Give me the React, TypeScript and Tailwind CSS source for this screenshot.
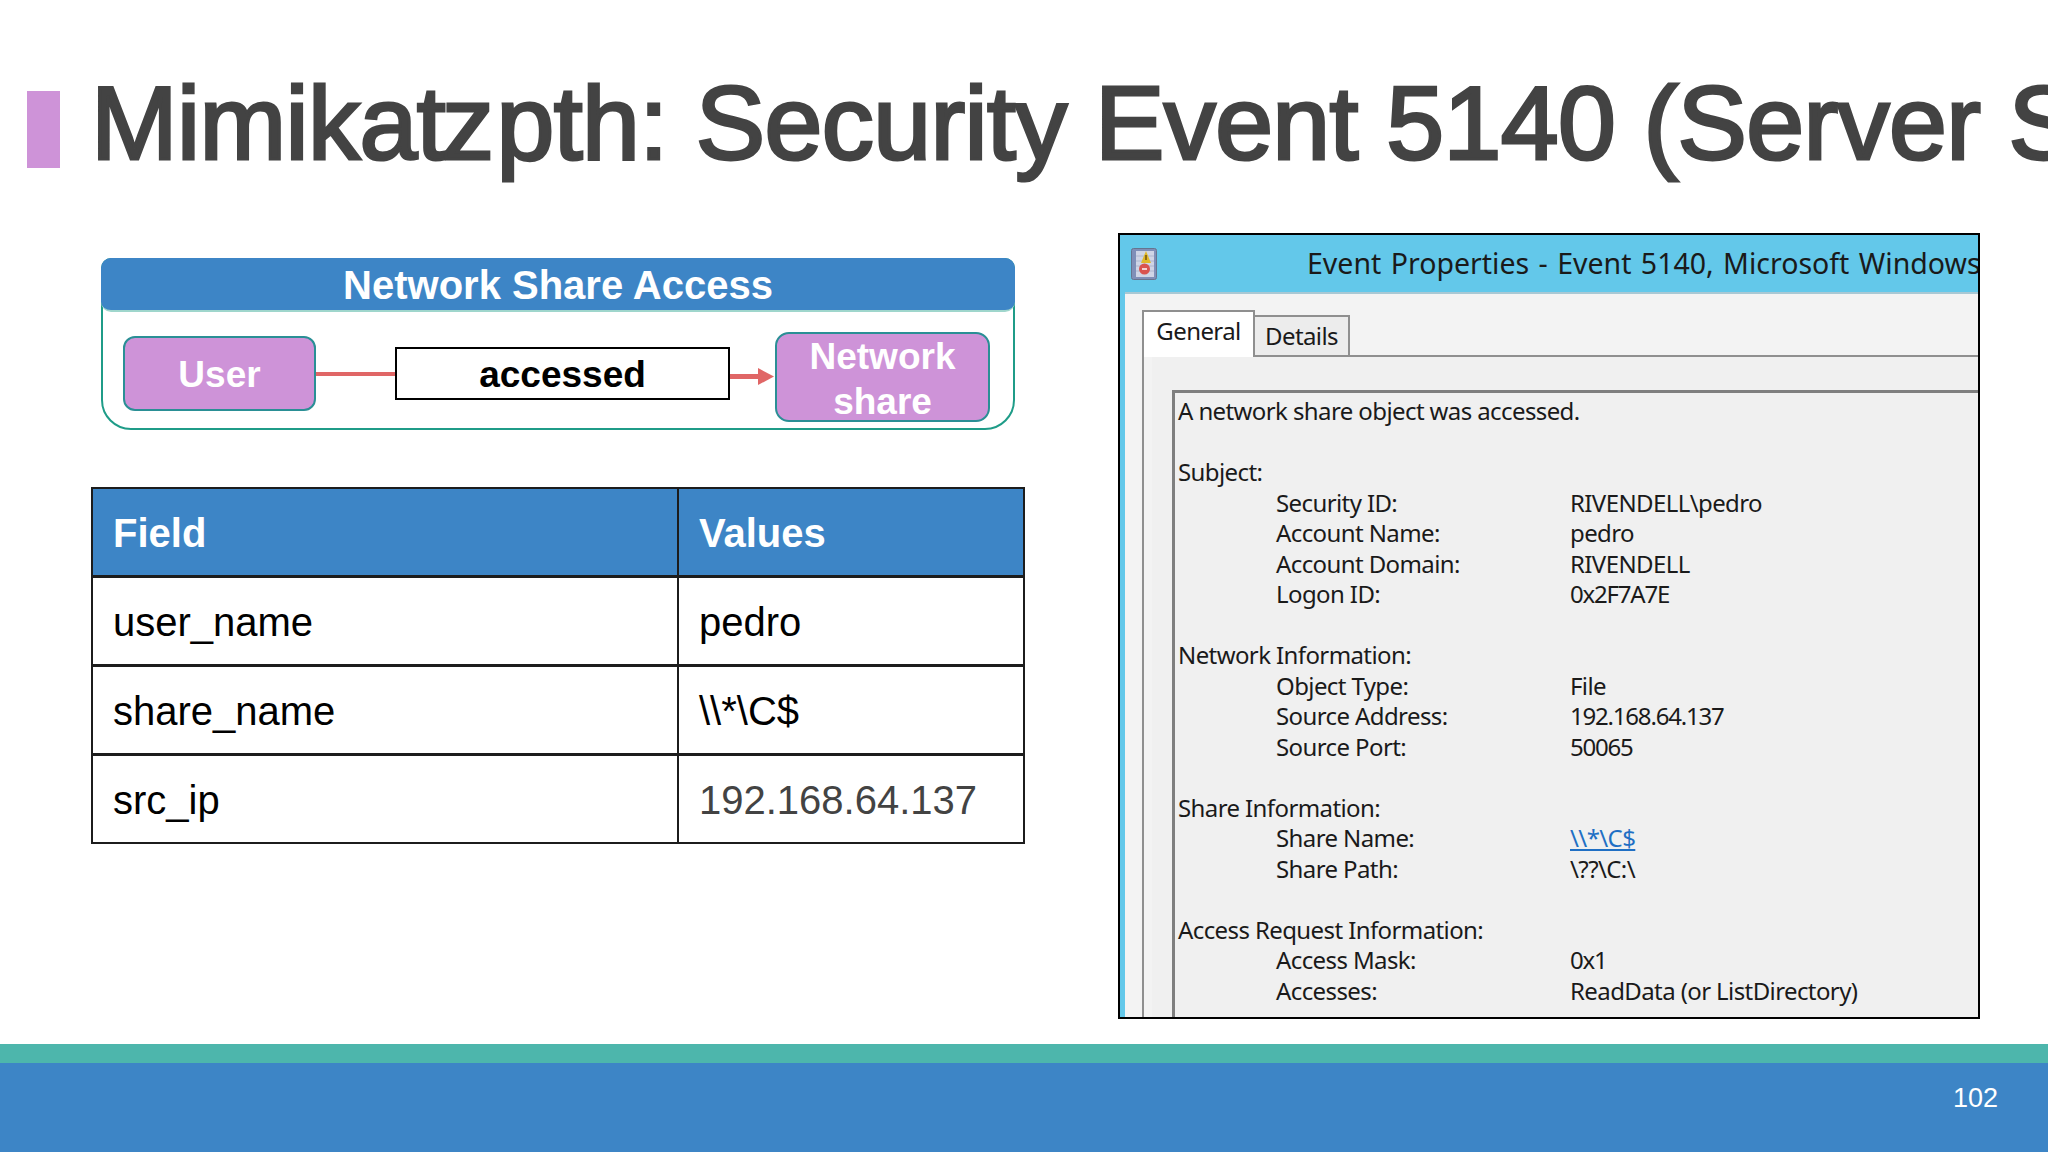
const sans = "font-['Liberation_Sans',Arial,sans-serif]"

const eventLines = [
  { head: 'A network share object was accessed.' },
  { blank: true },
  { head: 'Subject:' },
  { label: 'Security ID:', value: 'RIVENDELL\\pedro' },
  { label: 'Account Name:', value: 'pedro' },
  { label: 'Account Domain:', value: 'RIVENDELL' },
  { label: 'Logon ID:', value: '0x2F7A7E', tight: true },
  { blank: true },
  { head: 'Network Information:' },
  { label: 'Object Type:', value: 'File' },
  { label: 'Source Address:', value: '192.168.64.137', tight: true },
  { label: 'Source Port:', value: '50065', tight: true },
  { blank: true },
  { head: 'Share Information:' },
  { label: 'Share Name:', value: '\\\\*\\C$', link: true },
  { label: 'Share Path:', value: '\\??\\C:\\' },
  { blank: true },
  { head: 'Access Request Information:' },
  { label: 'Access Mask:', value: '0x1', tight: true },
  { label: 'Accesses:', value: 'ReadData (or ListDirectory)' },
]

const rows = [
  { field: 'user_name', value: 'pedro' },
  { field: 'share_name', value: '\\\\*\\C$' },
  { field: 'src_ip', value: '192.168.64.137', muted: true },
]

function Diagram() {
  return (
    <div className="ml-[101px] flex h-[172px] w-[914px] flex-col rounded-t-[10px] rounded-b-[30px] border-2 border-[#1f9c88] bg-white">
      <div className="-mx-[2px] -mt-[2px] flex h-[54px] items-center justify-center rounded-[10px] border-b-2 border-[#9fd6cc] bg-[#3d85c6] pt-[2px] text-[40px] font-bold text-white">
        Network Share Access
      </div>
      <div className="flex pl-[20px]">
        <div className="mt-[24px] flex h-[75px] w-[193px] items-center justify-center rounded-[12px] border-2 border-[#2a8f95] bg-[#ce93d8] pt-[2px] text-[37px] font-bold text-white">
          User
        </div>
        <div className="mt-[60px] h-[4px] w-[79px] bg-[#e06666]" />
        <div className="mt-[35px] flex h-[53px] w-[335px] items-center justify-center border-2 border-black bg-white pt-[2px] text-[37px] font-bold text-black">
          accessed
        </div>
        <svg className="mt-[50px] h-[30px] w-[45px]" viewBox="0 0 45 30">
          <rect x="0" y="12" width="30" height="5" fill="#e06666" />
          <path d="M28 6 L44 14.5 L28 23 Z" fill="#e06666" />
        </svg>
        <div className="mt-[20px] flex h-[90px] w-[215px] items-center justify-center rounded-[14px] border-2 border-[#2a8f95] bg-[#ce93d8] pt-[3px] text-center text-[37px] font-bold leading-[45px] text-white">
          Network
          <br />
          share
        </div>
      </div>
    </div>
  )
}

function FieldTable() {
  return (
    <div className="mt-[57px] ml-[91px] w-[934px] border-2 border-[#1c1c1c] text-[40px]">
      <div className="flex h-[86px] items-center bg-[#3d85c6] font-bold text-white">
        <div className="flex h-full w-[586px] items-center border-r-2 border-[#1c1c1c] pt-[2px] pl-[20px]">Field</div>
        <div className="pt-[2px] pl-[20px]">Values</div>
      </div>
      {rows.map((row) => (
        <div key={row.field} className="flex h-[89px] items-center border-t-[3px] border-[#1c1c1c] text-black">
          <div className="flex h-full w-[586px] items-center border-r-2 border-[#1c1c1c] pt-[2px] pl-[20px]">{row.field}</div>
          <div className={row.muted ? 'pt-[2px] pl-[20px] text-[#434343]' : 'pt-[2px] pl-[20px]'}>{row.value}</div>
        </div>
      ))}
    </div>
  )
}

function LogIcon() {
  return (
    <svg className="h-[32px] w-[26px] shrink-0" viewBox="0 0 26 32">
      <rect x="0.5" y="0.5" width="25" height="31" rx="2" fill="#7f8fb8" stroke="#66748f" />
      <rect x="5" y="3" width="18" height="26" fill="#cfd5e6" />
      <path d="M5 8 H23 M5 13 H23 M5 18 H23 M5 23 H23" stroke="#aeb7d0" strokeWidth="1" />
      <path d="M15 3 L20 15 H10 Z" fill="#e0b92a" />
      <rect x="14.2" y="7" width="1.6" height="5" fill="#7a5a10" />
      <circle cx="13.5" cy="21" r="5.5" fill="#d9534f" />
      <rect x="11" y="20" width="5" height="2" fill="#f4d0d0" />
    </svg>
  )
}

function EventWindow() {
  return (
    <div className="flex h-[786px] w-[862px] flex-col overflow-hidden border-2 border-black bg-[#63c8ea]">
      <div className="flex h-[57px] shrink-0 items-center pl-[11px] font-['Noto_Sans',sans-serif] text-[28.5px] text-[#1a1a1a]">
        <LogIcon />
        <span className="ml-[150px] shrink-0 whitespace-nowrap [word-spacing:2px]">Event Properties - Event 5140, Microsoft Windows</span>
      </div>
      <div className="ml-[5px] flex flex-1 flex-col border-t-2 border-[#a8c8d4] bg-[#f3f3f3] pl-[17px] font-['Noto_Sans',sans-serif] text-[#1a1a1a]">
        <div className="mt-[16px] flex h-[47px] items-end">
          <div className="flex h-[47px] w-[113px] items-center justify-center border-2 border-b-0 border-[#8f8f8f] bg-white pb-[8px] text-[24px] tracking-[-0.6px]">General</div>
          <div className="flex h-[42px] w-[95px] items-center justify-center border-2 border-b-2 border-l-0 border-[#8f8f8f] bg-[#ececec] text-[24px] tracking-[-0.6px]">Details</div>
          <div className="h-[2px] flex-1 bg-[#8f8f8f]" />
        </div>
        <div className="flex flex-1 border-l-2 border-[#8f8f8f] pl-[8px]">
          <div className="flex flex-1 bg-[#f0f0f0] pl-[20px] pt-[33px]">
            <div className="flex-1 border-t-[3px] border-l-[3px] border-[#7f7f7f] pl-[3px] pt-[3px] text-[24px] leading-[30.5px] tracking-[-0.6px]">
              {eventLines.map((line, i) => {
                if (line.blank) return <div key={i} className="h-[30.5px]" />
                if (line.head) return <div key={i} className="whitespace-nowrap">{line.head}</div>
                return (
                  <div key={i} className="flex whitespace-nowrap pl-[98px]">
                    <div className="w-[294px]">{line.label}</div>
                    <div className={line.link ? 'text-[#1f6fc4] underline' : line.tight ? 'tracking-[-1.2px]' : ''}>{line.value}</div>
                  </div>
                )
              })}
            </div>
          </div>
        </div>
      </div>
    </div>
  )
}

export default function App() {
  return (
    <div className={`flex h-[1152px] w-[2048px] flex-col overflow-hidden bg-white ${sans}`}>
      <div className="flex h-[233px] shrink-0 items-start pt-[63px] pl-[27px]">
        <div className="mt-[28px] h-[77px] w-[33px] shrink-0 bg-[#ce93d8]" />
        <h1 className="ml-[31px] whitespace-nowrap text-[104px] leading-[120px] font-normal tracking-[-0.6px] text-[#434343] [-webkit-text-stroke:3px_#434343]">
          Mimikat<span className="-ml-[3px] mr-[3px]">z</span>pth: Security Event 5140 (Server Share)
        </h1>
      </div>
      <div className="flex flex-1">
        <div className="w-[1118px] shrink-0 pt-[25px]">
          <Diagram />
          <FieldTable />
        </div>
        <EventWindow />
      </div>
      <div className="h-[19px] shrink-0 bg-[#4db6ac]" />
      <div className="flex h-[89px] shrink-0 items-center justify-end bg-[#3d85c6] pr-[50px] pb-[18px] text-[27px] text-white">
        102
      </div>
    </div>
  )
}
